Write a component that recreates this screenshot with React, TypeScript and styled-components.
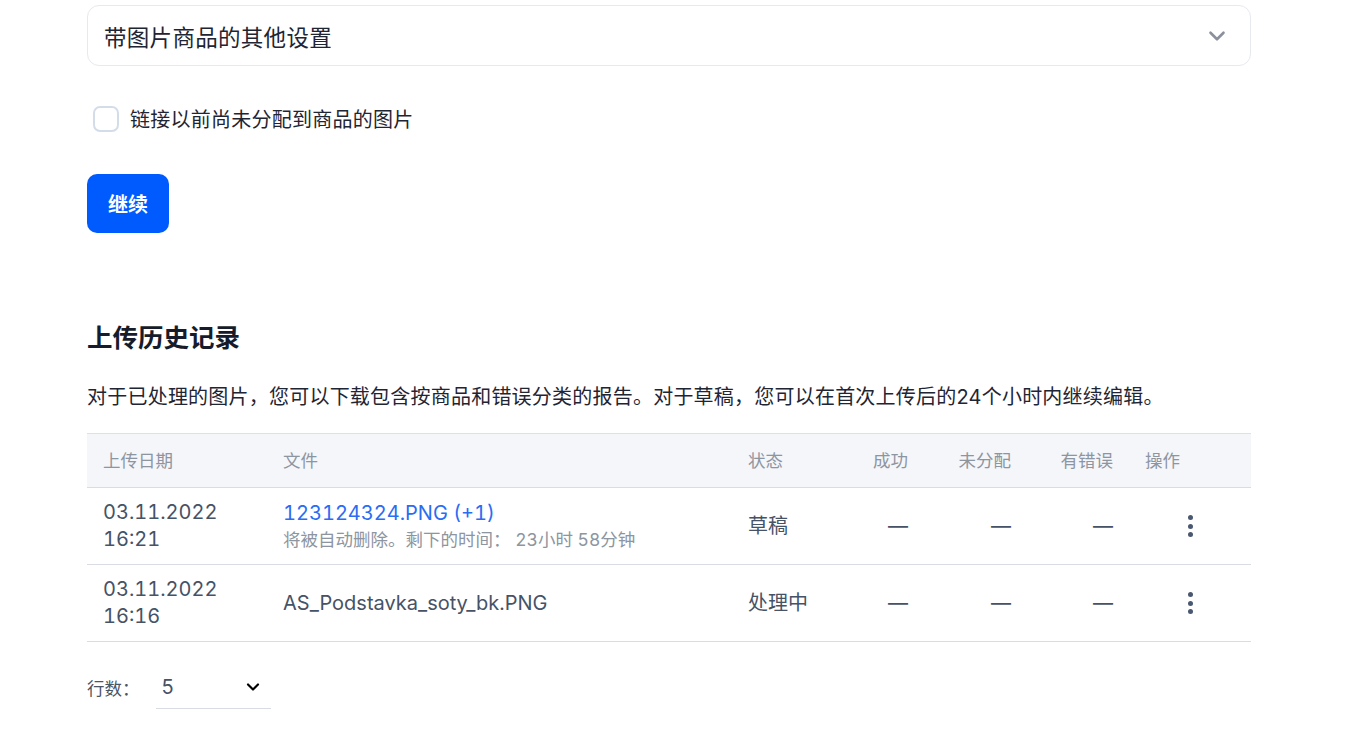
import React from 'react';
import styled, { createGlobalStyle } from 'styled-components';

const GlobalStyle = createGlobalStyle`
  body {
    margin: 0;
    background: #ffffff;
    font-family: Inter, "Noto Sans CJK SC", sans-serif;
    color: #1f2937;
  }
`;

const Page = styled.div`
  width: 1164px;
  margin-left: 87px;
  padding-top: 5px;
`;

const Accordion = styled.div`
  height: 61px;
  box-sizing: border-box;
  border: 1px solid #e6e9ee;
  border-radius: 12px;
  display: flex;
  align-items: center;
  justify-content: space-between;
  padding: 0 20px 0 16px;
  font-size: 22.5px;
  letter-spacing: 0.3px;
  color: #1f2533;
`;

const CheckRow = styled.label`
  display: flex;
  align-items: center;
  gap: 11px;
  margin-top: 38px;
  margin-left: 6px;
  font-size: 20px;
  letter-spacing: 0.25px;
  color: #1f2533;
`;

const Box = styled.span`
  width: 26px;
  height: 26px;
  box-sizing: border-box;
  border: 2px solid #d3dde9;
  border-radius: 7px;
`;

const PrimaryButton = styled.button`
  margin-top: 41px;
  height: 59px;
  padding: 0 21px;
  border: none;
  border-radius: 10px;
  background: #005bff;
  color: #fff;
  font-family: Inter, "Noto Sans CJK SC", sans-serif;
  font-size: 20px;
  font-weight: 700;
`;

const Heading = styled.h2`
  margin: 88px 0 0;
  font-size: 25.5px;
  line-height: 34px;
  font-weight: 700;
  color: #161c2b;
`;

const Description = styled.p`
  margin: 27px 0 0;
  font-size: 20px;
  letter-spacing: 0.22px;
  line-height: 30px;
  color: #1f2533;
`;

const Table = styled.div`
  margin-top: 21px;
  border-top: 1px solid #dde1e6;
`;

const Row = styled.div<{ $head?: boolean }>`
  display: grid;
  grid-template-columns: 180px 465px 120px 72px 103px 102px 1fr;
  align-items: center;
  height: ${(p) => (p.$head ? '53px' : '76px')};
  background: ${(p) => (p.$head ? '#f5f6fa' : '#fff')};
  border-bottom: 1px solid #d9dde3;
  font-size: ${(p) => (p.$head ? '17.5px' : '20px')};
  color: ${(p) => (p.$head ? '#8d95a1' : '#465266')};
  font-variant-numeric: tabular-nums;
`;

const Cell = styled.div<{ $right?: boolean }>`
  padding: ${(p) => (p.$right ? '0 16px 0 0' : '0 0 0 16px')};
  text-align: ${(p) => (p.$right ? 'right' : 'left')};
  line-height: 27px;
`;

const FileLink = styled.a`
  display: block;
  color: #2a6cf3;
  text-decoration: none;
  line-height: 27px;
`;

const Hint = styled.div`
  font-size: 17.5px;
  line-height: 26px;
  color: #8d95a1;
  white-space: pre;
`;

const Kebab = styled.button`
  margin-left: 33px;
  width: 24px;
  height: 30px;
  padding: 0;
  border: none;
  background: none;
  display: flex;
  flex-direction: column;
  align-items: center;
  justify-content: center;
  gap: 3.5px;
  span {
    width: 5px;
    height: 5px;
    border-radius: 50%;
    background: #4a5770;
  }
`;

const Footer = styled.div`
  display: flex;
  align-items: center;
  gap: 16px;
  margin-top: 23px;
  font-size: 17.5px;
  color: #4b5563;
`;

const PageSize = styled.div`
  width: 115px;
  height: 44px;
  box-sizing: border-box;
  border-bottom: 1px solid #d9dde3;
  display: flex;
  align-items: center;
  justify-content: space-between;
  padding: 0 8px 0 6px;
  font-size: 20px;
  color: #465266;
`;

const Chevron = ({ color, size, w }: { color: string; size: number; w: number }) => (
  <svg width={size} height={size} viewBox="0 0 24 24" fill="none" stroke={color} strokeWidth={w} strokeLinecap="round" strokeLinejoin="round">
    <path d="M6 9l6 6 6-6" />
  </svg>
);

const Dash = () => <>—</>;

const rows = [
  {
    date: '03.11.2022',
    time: '16:21',
    file: '123124324.PNG (+1)',
    link: true,
    hint: '将被自动删除。剩下的时间： 23小时 58分钟',
    status: '草稿',
  },
  {
    date: '03.11.2022',
    time: '16:16',
    file: 'AS_Podstavka_soty_bk.PNG',
    link: false,
    hint: '',
    status: '处理中',
  },
];

export default function App() {
  return (
    <>
      <GlobalStyle />
      <Page>
        <Accordion>
          <span>带图片商品的其他设置</span>
          <Chevron color="#8a919c" size={26} w={2.4} />
        </Accordion>

        <CheckRow>
          <Box />
          链接以前尚未分配到商品的图片
        </CheckRow>

        <PrimaryButton>继续</PrimaryButton>

        <Heading>上传历史记录</Heading>
        <Description>
          对于已处理的图片，您可以下载包含按商品和错误分类的报告。对于草稿，您可以在首次上传后的24个小时内继续编辑。
        </Description>

        <Table>
          <Row $head>
            <Cell>上传日期</Cell>
            <Cell>文件</Cell>
            <Cell>状态</Cell>
            <Cell $right>成功</Cell>
            <Cell $right>未分配</Cell>
            <Cell $right>有错误</Cell>
            <Cell>操作</Cell>
          </Row>
          {rows.map((r) => (
            <Row key={r.time}>
              <Cell>
                {r.date}
                <br />
                {r.time}
              </Cell>
              <Cell>
                {r.link ? <FileLink href="#">{r.file}</FileLink> : r.file}
                {r.hint && <Hint>{r.hint}</Hint>}
              </Cell>
              <Cell>{r.status}</Cell>
              <Cell $right><Dash /></Cell>
              <Cell $right><Dash /></Cell>
              <Cell $right><Dash /></Cell>
              <Cell>
                <Kebab>
                  <span />
                  <span />
                  <span />
                </Kebab>
              </Cell>
            </Row>
          ))}
        </Table>

        <Footer>
          <span>行数：</span>
          <PageSize>
            <span>5</span>
            <Chevron color="#000" size={20} w={2.6} />
          </PageSize>
        </Footer>
      </Page>
    </>
  );
}
